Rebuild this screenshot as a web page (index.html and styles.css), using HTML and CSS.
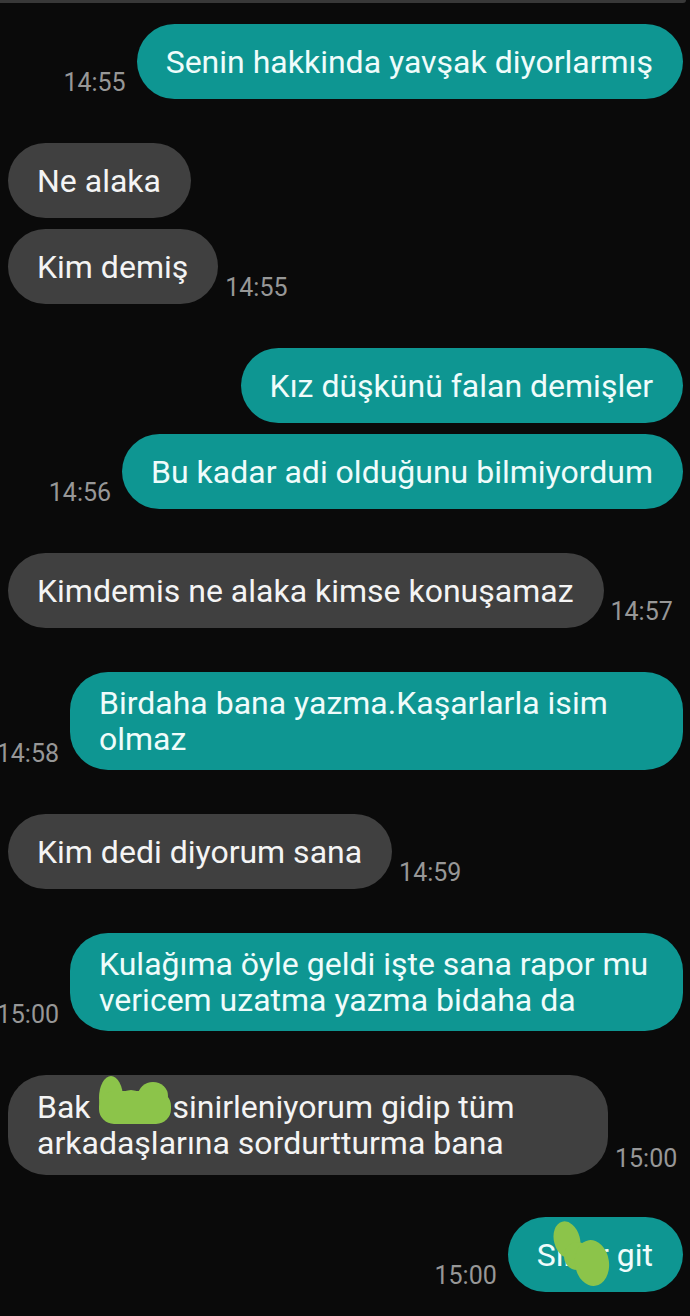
FILE: index.html
```html
<!DOCTYPE html>
<html lang="tr">
<head>
    <meta charset="UTF-8">
    <title>Mesajlar</title>
    <link rel="stylesheet" href="styles.css">
</head>
<body>
<div class="topbar"></div>

<div class="chat">
    <div class="group">
        <div class="row out">
            <span class="time">14:55</span>
            <div class="bubble"><span class="txt">Senin hakkinda yavşak diyorlarmış</span></div>
        </div>
    </div>

    <div class="group">
        <div class="row in">
            <div class="bubble"><span class="txt">Ne alaka</span></div>
        </div>
        <div class="row in">
            <div class="bubble"><span class="txt">Kim demiş</span></div>
            <span class="time">14:55</span>
        </div>
    </div>

    <div class="group">
        <div class="row out">
            <div class="bubble"><span class="txt">Kız düşkünü falan demişler</span></div>
        </div>
        <div class="row out">
            <span class="time">14:56</span>
            <div class="bubble"><span class="txt">Bu kadar adi olduğunu bilmiyordum</span></div>
        </div>
    </div>

    <div class="group">
        <div class="row in">
            <div class="bubble"><span class="txt">Kimdemis ne alaka kimse konuşamaz</span></div>
            <span class="time">14:57</span>
        </div>
    </div>

    <div class="group">
        <div class="row out">
            <span class="time">14:58</span>
            <div class="bubble"><span class="txt">Birdaha bana yazma.Kaşarlarla isim olmaz</span></div>
        </div>
    </div>

    <div class="group">
        <div class="row in">
            <div class="bubble"><span class="txt">Kim dedi diyorum sana</span></div>
            <span class="time">14:59</span>
        </div>
    </div>

    <div class="group">
        <div class="row out">
            <span class="time">15:00</span>
            <div class="bubble"><span class="txt">Kulağıma öyle geldi işte sana rapor mu vericem uzatma yazma bidaha da</span></div>
        </div>
    </div>

    <div class="group">
        <div class="row in">
            <div class="bubble tall"><span class="txt">Bak <span class="redact"><svg class="scribble-a" width="76" height="50" viewBox="0 0 76 50">
                <ellipse cx="14" cy="22" rx="12" ry="22"/>
                <ellipse cx="56" cy="20" rx="15" ry="14"/>
                <ellipse cx="34" cy="24" rx="12" ry="10"/>
                <rect x="2" y="15" width="72" height="33" rx="15"/>
            </svg></span> sinirleniyorum gidip tüm arkadaşlarına sordurtturma bana</span></div>
            <span class="time">15:00</span>
        </div>
    </div>

    <div class="group last">
        <div class="row out">
            <span class="time">15:00</span>
            <div class="bubble"><span class="txt">Siktir git</span>
                <svg class="scribble-b" width="60" height="66" viewBox="0 0 60 66">
                    <ellipse cx="17" cy="19" rx="13" ry="19" transform="rotate(-15 17 19)"/>
                    <ellipse cx="27" cy="35" rx="13" ry="14"/>
                    <ellipse cx="42" cy="42" rx="17" ry="23" transform="rotate(-8 42 42)"/>
                </svg>
            </div>
        </div>
    </div>
</div>
</body>
</html>
```

FILE: styles.css
```css
* {
    margin: 0;
    padding: 0;
    box-sizing: border-box;
}

html,
body {
    background-color: #0a0a0a;
}

body {
    width: 690px;
    height: 1316px;
    overflow: hidden;
    font-family: Roboto, "Noto Sans", sans-serif;
}

/* bottom edge of the message above, cut off by the screenshot */
.topbar {
    height: 3px;
    margin-right: 4px;
    background-color: #383838;
    border-bottom-right-radius: 4px;
}

.chat {
    display: flex;
    flex-direction: column;
    gap: 44px;
    padding: 21px 7px 0 8px;
}

.group {
    display: flex;
    flex-direction: column;
    gap: 11px;
}

.group.last {
    margin-top: -2px;
}

.row {
    display: flex;
    align-items: flex-end;
    gap: 7px;
}

.row.out {
    justify-content: flex-end;
    gap: 11px;
}

.bubble {
    position: relative;
    display: flex;
    align-items: center;
    flex-shrink: 0;
    min-height: 75px;
    padding: 13px 30px 13px 29px;
    border-radius: 38px;
    font-size: 32px;
    line-height: 36px;
}

.bubble.tall {
    padding-top: 14px;
    padding-bottom: 14px;
}

.in .bubble {
    max-width: 600px;
    background-color: #404040;
    color: #f4f4f4;
}

.out .bubble {
    max-width: 613px;
    background-color: #0e9692;
    color: #effcfb;
}

.time {
    flex-shrink: 0;
    margin-bottom: 2px;
    font-size: 25px;
    line-height: 28px;
    color: #979797;
    white-space: nowrap;
}

/* green marker scribbles hiding words */
.redact {
    position: relative;
    display: inline-block;
    width: 66px;
    height: 1px;
}

.scribble-a {
    position: absolute;
    left: -2px;
    top: -41px;
    fill: #8cc44a;
}

.scribble-b {
    position: absolute;
    left: 42px;
    top: 4px;
    fill: #8cc44a;
}
```
